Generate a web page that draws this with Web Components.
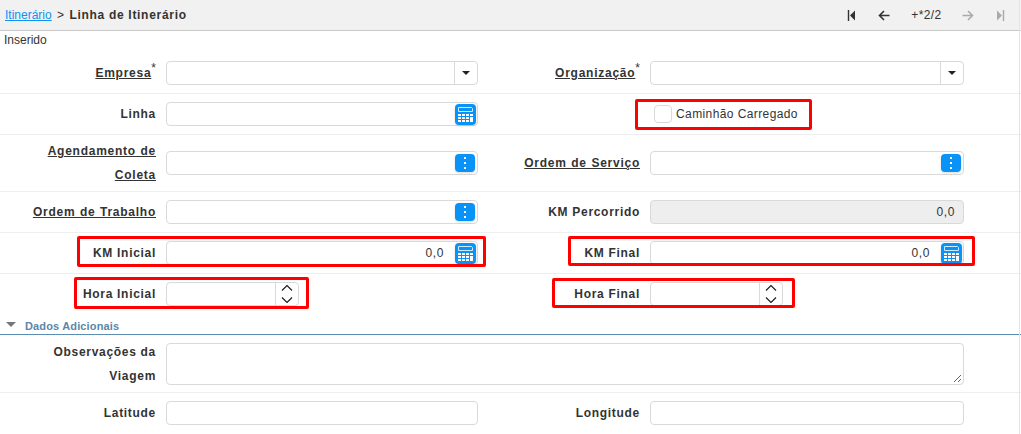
<!DOCTYPE html>
<html lang="pt-BR">
<head>
<meta charset="utf-8">
<title>Linha de Itinerário</title>
<style>
    html, body { margin: 0; background: #fff; }
    body { font-family: "Liberation Sans", Arial, sans-serif; font-size: 12px; color: #333; overflow: hidden; }
</style>
</head>
<body>
<itinerary-page>
    <breadcrumb-bar slot="top"></breadcrumb-bar>
    <form-row>
        <form-field label="Empresa" link required kind="select"></form-field>
        <form-field label="Organização" link required kind="select" wide></form-field>
    </form-row>
    <form-row>
        <form-field label="Linha" kind="calc"></form-field>
        <check-field label="Caminhão Carregado"></check-field>
    </form-row>
    <form-row>
        <form-field label="Agendamento de Coleta" link kind="search"></form-field>
        <form-field label="Ordem de Serviço" link kind="search" wide></form-field>
    </form-row>
    <form-row>
        <form-field label="Ordem de Trabalho" link kind="search"></form-field>
        <form-field label="KM Percorrido" kind="readonly" value="0,0" wide></form-field>
    </form-row>
    <form-row>
        <form-field label="KM Inicial" kind="calc" value="0,0"></form-field>
        <form-field label="KM Final" kind="calc" value="0,0" wide></form-field>
    </form-row>
    <form-row last>
        <form-field label="Hora Inicial" kind="time"></form-field>
        <form-field label="Hora Final" kind="time" wide></form-field>
    </form-row>
    <section-title>Dados Adicionais</section-title>
    <form-row>
        <form-field label="Observações da Viagem" kind="area" full></form-field>
    </form-row>
    <form-row last>
        <form-field label="Latitude"></form-field>
        <form-field label="Longitude" wide></form-field>
    </form-row>

    <red-mark slot="marks" style="left:635px;top:99px;width:177px;height:31px"></red-mark>
    <red-mark slot="marks" style="left:77px;top:236px;width:409px;height:31px"></red-mark>
    <red-mark slot="marks" style="left:568px;top:236px;width:407px;height:30px"></red-mark>
    <red-mark slot="marks" style="left:74px;top:277px;width:235px;height:32px"></red-mark>
    <red-mark slot="marks" style="left:552px;top:278px;width:243px;height:30px"></red-mark>
</itinerary-page>

<script>
const CALC_ICON = `
    <svg width="21" height="21" viewBox="0 0 21 21">
        <rect width="21" height="21" rx="4" fill="#0a93f7"/>
        <path d="M3.500 3.500h13l1 1v3h-14z" fill="#0a93f7" stroke="#cfe9fd" stroke-width="1"/>
        <path d="M3 10h3v2H3zM7 10h3v2H7zM11 10h3v2h-3zM15 10h3v2h-3zM3 13h3v2H3zM7 13h3v2H7zM11 13h3v2h-3zM3 16h3v2H3zM7 16h3v2H7zM11 16h3v2h-3zM15 13h3v5h-3z" fill="#fff"/>
    </svg>`;

const DOTS_ICON = `
    <svg width="20" height="18" viewBox="0 0 20 18">
        <rect width="20" height="18" rx="4" fill="#0a93f7"/>
        <path d="M9 3h2v2H9zM9 8h2v2H9zM9 13h2v2H9z" fill="#fff"/>
    </svg>`;

class ItineraryPage extends HTMLElement {
    constructor() {
        super();
        this.attachShadow({ mode: 'open' });
        this.shadowRoot.innerHTML = `
            <style>
                :host {
                    display: block;
                    position: relative;
                    height: 434px;
                    overflow: hidden;
                }
                .status {
                    height: 22px;
                    line-height: 18px;
                    padding-left: 4px;
                    font-size: 12px;
                    color: #333;
                }
                .edge {
                    position: absolute;
                    top: 0;
                    right: 1px;
                    bottom: 0;
                    width: 1px;
                    background: #e4e4e4;
                }
            </style>
            <slot name="top"></slot>
            <div class="status">Inserido</div>
            <slot></slot>
            <div class="edge"></div>
            <slot name="marks"></slot>
        `;
    }
}

class BreadcrumbBar extends HTMLElement {
    constructor() {
        super();
        this.attachShadow({ mode: 'open' });
        this.shadowRoot.innerHTML = `
            <style>
                :host {
                    display: flex;
                    align-items: center;
                    justify-content: space-between;
                    box-sizing: border-box;
                    height: 31px;
                    background: #f1f1f1;
                    border-bottom: 1px solid #c9c9c9;
                    padding: 0 5px;
                    font-size: 12px;
                    color: #333;
                }
                a { color: #0a93f7; text-decoration: underline; }
                .sep { margin: 0 2px 0 2px; }
                b { letter-spacing: .7px; }
                nav { display: flex; align-items: center; }
                .btn { display: flex; width: 32px; justify-content: center; }
                .count { width: 52px; text-align: center; font-size: 12px; letter-spacing: .4px; padding-left: 1px; box-sizing: border-box; }
                svg { display: block; }
            </style>
            <div><a href="#">Itinerário</a> <span class="sep">&gt;</span> <b>Linha de Itinerário</b></div>
            <nav>
                <span class="btn"><svg width="10" height="11" viewBox="0 0 10 11"><path d="M1.500 0v11" stroke="#333" stroke-width="1.400"/><path d="M8 .5v10L3 5.500z" fill="#333"/></svg></span>
                <span class="btn"><svg width="12" height="11" viewBox="0 0 12 11"><path d="M6 1L1.500 5.500 6 10M2 5.500h9.500" fill="none" stroke="#333" stroke-width="1.600"/></svg></span>
                <span class="count">+*2/2</span>
                <span class="btn"><svg width="12" height="11" viewBox="0 0 12 11"><path d="M6 1l4.500 4.500L6 10M10 5.500H.5" fill="none" stroke="#aaa" stroke-width="1.600"/></svg></span>
                <span class="btn"><svg width="10" height="11" viewBox="0 0 10 11"><path d="M8.500 0v11" stroke="#aaa" stroke-width="1.400"/><path d="M2 .5v10l5-5z" fill="#aaa"/></svg></span>
            </nav>
        `;
    }
}

class FormRow extends HTMLElement {
    constructor() {
        super();
        this.attachShadow({ mode: 'open' });
        this.shadowRoot.innerHTML = `
            <style>
                :host {
                    display: grid;
                    grid-template-columns: 478px 486px;
                    align-items: center;
                    padding: 4px 0;
                    border-bottom: 1px solid #eee;
                }
                :host([last]) { border-bottom: 0; }
            </style>
            <slot></slot>
        `;
    }
}

class FormField extends HTMLElement {
    constructor() {
        super();
        this.attachShadow({ mode: 'open' });
    }

    connectedCallback() {
        const kind = this.getAttribute('kind') || 'text';
        const value = this.getAttribute('value') || '';
        const label = this.getAttribute('label');
        const link = this.hasAttribute('link');
        const star = this.hasAttribute('required') ? '<sup>*</sup>' : '';

        const addons = {
            select: '<span class="arrow"><i></i></span>',
            calc: `<span class="tool calc">${CALC_ICON}</span>`,
            search: `<span class="tool">${DOTS_ICON}</span>`,
            time: `<span class="spin">
                       <svg width="12" height="18" viewBox="0 0 12 18"><path d="M1 5.500l5-5 5 5M1 12.500l5 5 5-5" fill="none" stroke="#222" stroke-width="1.200"/></svg>
                   </span>`
        };

        this.shadowRoot.innerHTML = `
            <style>
                :host {
                    display: grid;
                    grid-template-columns: 156px 1fr;
                    column-gap: 10px;
                    align-items: center;
                }
                :host([wide]) { grid-template-columns: 152px 1fr; padding-left: 10px; }
                :host([full]) { grid-column: 1 / -1; grid-template-columns: 156px 798px; }
                label {
                    padding-left: 30px;
                    text-align: right;
                    font-weight: 700;
                    font-size: 12px;
                    line-height: 24px;
                    letter-spacing: .7px;
                    color: #333;
                }
                label.link { letter-spacing: .75px; word-spacing: .5px; }
                label.link span { text-decoration: underline; }
                sup { font-weight: 400; font-size: 12px; line-height: 0; letter-spacing: 0; }
                .box {
                    display: flex;
                    align-items: center;
                    box-sizing: border-box;
                    height: 24px;
                    margin: 4px 0;
                    border: 1px solid #d9d9d9;
                    border-radius: 4px;
                    background: #fff;
                    font-size: 12px;
                    color: #333;
                }
                .value { flex: 1; text-align: right; padding-right: 8px; letter-spacing: .6px; }
                .calc .value { padding-right: 9px; }
                .readonly { background: #eee; }
                .time { width: 133px; }
                .area { height: 42px; margin-bottom: 3px; position: relative; }
                .grip { position: absolute; right: 1px; bottom: 1px; display: block; }
                .arrow {
                    display: flex;
                    align-items: center;
                    justify-content: center;
                    width: 22px;
                    height: 100%;
                    margin-left: auto;
                    border-left: 1px solid #d9d9d9;
                }
                .arrow i {
                    width: 0;
                    height: 0;
                    border-left: 4px solid transparent;
                    border-right: 4px solid transparent;
                    border-top: 4px solid #222;
                }
                .tool { display: flex; margin-left: auto; padding-right: 2px; }
                .tool.calc { padding-right: 1px; }
                .value + .tool { margin-left: 0; padding-left: 2px; }
                .tool svg { display: block; filter: drop-shadow(0 1px 1px rgba(0,0,0,.15)); }
                .spin {
                    display: flex;
                    align-items: center;
                    justify-content: center;
                    width: 22px;
                    height: 100%;
                    margin-left: auto;
                    border-left: 1px solid #d9d9d9;
                }
            </style>
            <label class="${link ? 'link' : ''}"><span>${label}</span>${star}</label>
            <div class="box ${kind}">
                ${value ? `<span class="value">${value}</span>` : ''}
                ${addons[kind] || ''}
                ${kind === 'area' ? '<svg class="grip" width="9" height="9" viewBox="0 0 9 9"><path d="M8 1L1 8M8 5L5 8" stroke="#666"/></svg>' : ''}
            </div>
        `;
    }
}

class CheckField extends HTMLElement {
    constructor() {
        super();
        this.attachShadow({ mode: 'open' });
    }

    connectedCallback() {
        this.shadowRoot.innerHTML = `
            <style>
                :host {
                    display: flex;
                    align-items: center;
                    gap: 4px;
                    padding-left: 176px;
                    font-size: 12px;
                    letter-spacing: .4px;
                    color: #333;
                }
                i {
                    box-sizing: border-box;
                    width: 18px;
                    height: 18px;
                    border: 1px solid #d9d9d9;
                    border-radius: 4px;
                }
            </style>
            <i></i><span>${this.getAttribute('label')}</span>
        `;
    }
}

class SectionTitle extends HTMLElement {
    constructor() {
        super();
        this.attachShadow({ mode: 'open' });
        this.shadowRoot.innerHTML = `
            <style>
                :host {
                    display: flex;
                    align-items: center;
                    gap: 9px;
                    box-sizing: border-box;
                    height: 21px;
                    padding: 3px 0 0 6px;
                    border-bottom: 1px solid #5b8db3;
                    font-size: 11px;
                    font-weight: 700;
                    letter-spacing: .15px;
                    color: #5b87a8;
                }
                i {
                    width: 0;
                    height: 0;
                    margin-bottom: 3px;
                    border-left: 5px solid transparent;
                    border-right: 5px solid transparent;
                    border-top: 5px solid #777;
                }
            </style>
            <i></i><slot></slot>
        `;
    }
}

class RedMark extends HTMLElement {
    constructor() {
        super();
        this.attachShadow({ mode: 'open' });
        this.shadowRoot.innerHTML = `
            <style>
                :host {
                    display: block;
                    position: absolute;
                    box-sizing: border-box;
                    border: 3px solid #f00;
                    border-radius: 2px;
                    pointer-events: none;
                }
            </style>
        `;
    }
}

customElements.define('itinerary-page', ItineraryPage);
customElements.define('breadcrumb-bar', BreadcrumbBar);
customElements.define('form-row', FormRow);
customElements.define('form-field', FormField);
customElements.define('check-field', CheckField);
customElements.define('section-title', SectionTitle);
customElements.define('red-mark', RedMark);
</script>
</body>
</html>
